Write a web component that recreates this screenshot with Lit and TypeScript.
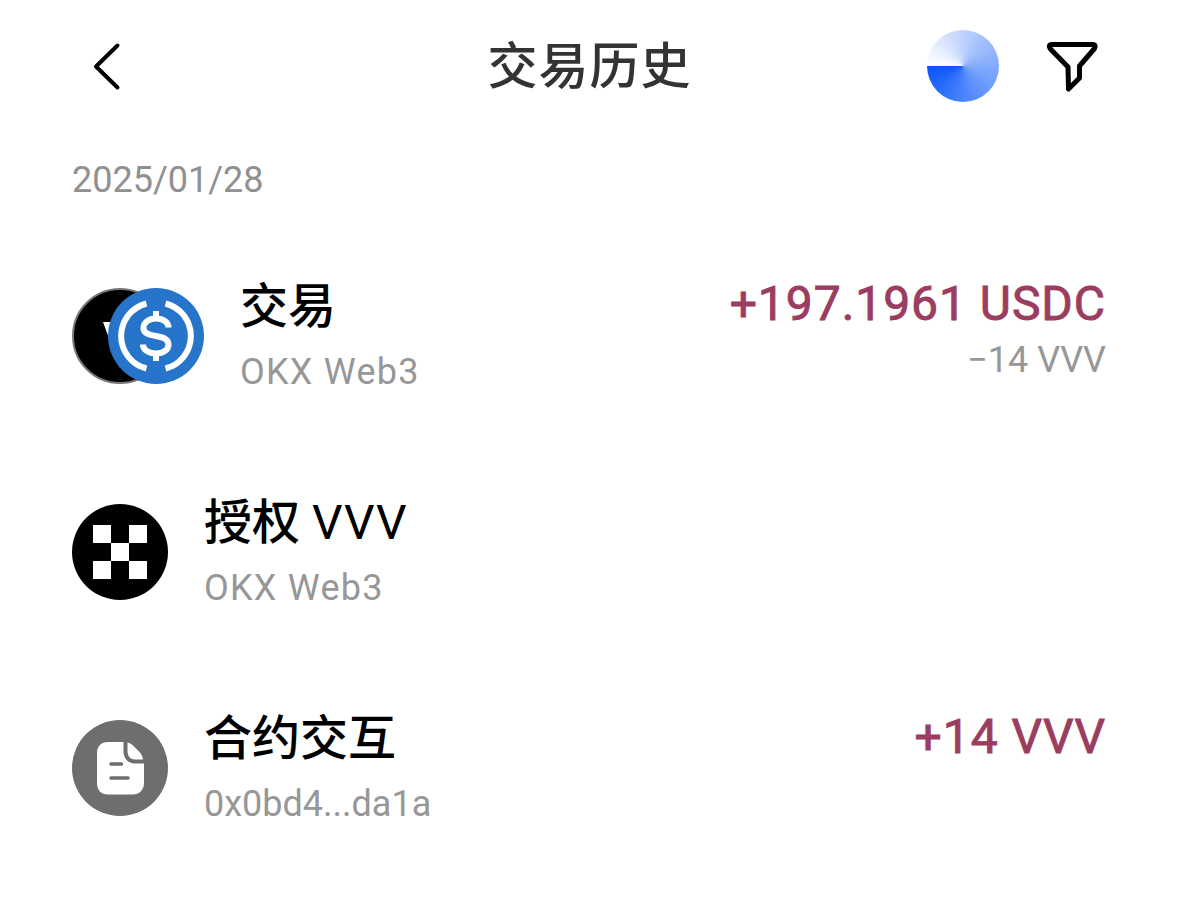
import { LitElement, html, css, svg } from "lit";
import { customElement } from "lit/decorators.js";

const usdcIcon = svg`<svg class="usdc" viewBox="0 0 96 96"><circle cx="48" cy="48" r="48" fill="#2775ca"/>
<path d="M38.500 15.500 A33.500 33.500 0 0 0 38.500 80.500 M57.500 15.500 A33.500 33.500 0 0 1 57.500 80.500" fill="none" stroke="#fff" stroke-width="6"/>
<path d="M60.500 39.500 C60.500 34 55 30.500 48 30.500 C41 30.500 35.500 34.500 35.500 40 C35.500 45.500 41 47 48 48 C55 49 60.500 51 60.500 56.500 C60.500 62 55 65.500 48 65.500 C41 65.500 35 62 35 56.500" fill="none" stroke="#fff" stroke-width="6"/>
<path d="M48 23 V31 M48 65 V73" stroke="#fff" stroke-width="6"/></svg>`;

const vvvIcon = svg`<svg class="vvv" viewBox="0 0 96 96"><circle cx="48" cy="48" r="47" fill="#000" stroke="#777" stroke-width="2"/>
<path d="M31 34 H65 L48 80 Z" fill="#fff"/></svg>`;

const okxIcon = svg`<svg class="icon" viewBox="0 0 96 96"><circle cx="48" cy="48" r="48" fill="#000"/>
<g fill="#fff"><rect x="21" y="21" width="18" height="18"/><rect x="57" y="21" width="18" height="18"/><rect x="39" y="39" width="18" height="18"/><rect x="21" y="57" width="18" height="18"/><rect x="57" y="57" width="18" height="18"/></g></svg>`;

const docIcon = svg`<svg class="icon" viewBox="0 0 96 96"><circle cx="48" cy="48" r="48" fill="#6e6e6e"/>
<path d="M36 22 H51.500 V31 C51.500 38.500 56 43.500 63 43.500 H72 V63 C72 70 67 74.500 61 74.500 H36 C29 74.500 25 70 25 63 V33 C25 26.500 29 22 36 22 Z" fill="#fff"/>
<path d="M55.500 22.500 C58 23 60 24.500 62 26.500 L67 31.500 C69 33.500 70.500 36 71 39.500 H63 C58.500 39.500 55.500 36 55.500 31 Z" fill="#fff"/>
<path d="M39 44 H49.500 M39 58 H56" stroke="#6e6e6e" stroke-width="3.500" stroke-linecap="round" fill="none"/></svg>`;

@customElement("app-root")
export class AppRoot extends LitElement {
  static styles = css`
    :host {
      display: block;
      width: 1179px;
      height: 897px;
      background: #fff;
      font-family: "Roboto", "Noto Sans CJK SC", sans-serif;
      overflow: hidden;
    }
    .header {
      display: grid;
      grid-template-columns: 1fr auto 1fr;
      align-items: center;
      height: 72px;
      padding: 30px 80px 0 90px;
    }
    .back { width: 34px; height: 50px; display: block; }
    .title {
      font-family: "Noto Sans CJK SC", sans-serif;
      font-size: 50px;
      font-weight: 500;
      line-height: 64px;
      padding-bottom: 8px;
      letter-spacing: 1px;
      color: #333;
      transform: translateX(-5px);
    }
    .actions {
      display: flex;
      justify-content: flex-end;
      align-items: center;
      gap: 46px;
    }
    .spinner {
      width: 72px;
      height: 72px;
      border-radius: 50%;
      background: conic-gradient(from 270deg, #fff 0deg, #a9c4fd 120deg, #5f92fb 240deg, #0a55fb 360deg);
    }
    .filter { width: 54px; height: 54px; display: block; }
    .date {
      margin: 57px 0 0 72px;
      font-size: 36px;
      line-height: 42px;
      color: #909090;
    }
    .rows { display: flex; flex-direction: column; padding: 0 73px 0 72px; margin-top: 79px; gap: 104px; }
    .row { display: flex; align-items: center; justify-content: space-between; height: 112px; }
    .left { display: flex; align-items: center; gap: 36px; }
    .icons { position: relative; width: 132px; height: 96px; flex: none; }
    .vvv, .usdc { position: absolute; top: 0; width: 96px; height: 96px; }
    .vvv { left: 0; }
    .usdc { left: 36px; }
    .icon { width: 96px; height: 96px; display: block; flex: none; }
    .info { display: flex; flex-direction: column; gap: 15px; }
    .name {
      font-size: 48px;
      line-height: 56px;
      font-weight: 500;
      color: #000;
    }
    .name .latin { font-weight: 400; letter-spacing: 1.5px; }
    .sub { font-size: 36px; line-height: 44px; color: #979797; }
    .sub.wide { letter-spacing: 1.25px; }
    .right { display: flex; flex-direction: column; align-items: flex-end; align-self: flex-start; margin-top: -6px; }
    .amount {
      font-size: 48px;
      line-height: 60px;
      font-weight: 400;
      letter-spacing: 0.95px;
      -webkit-text-stroke: 0.9px #9b3d60;
      color: #9b3d60;
    }
    .row:last-child .amount { padding-top: 1px; }
    .minor { font-size: 36px; line-height: 44px; margin-top: 4px; color: #979797; }
  `;

  render() {
    return html`
      <div class="header">
        <svg class="back" viewBox="0 0 34 50"><path d="M27.500 4.500 L6 25.500 L27.500 46.500" fill="none" stroke="#000" stroke-width="4" stroke-linecap="round" stroke-linejoin="round"/></svg>
        <div class="title">交易历史</div>
        <div class="actions">
          <div class="spinner"></div>
          <svg class="filter" viewBox="0 0 54 54"><path d="M6.500 5.500 H48 C50 5.500 51 7.500 49.500 9.500 L34.500 27 V39 L23.500 50 L23 28 L5 9.500 C3.500 7.500 4.500 5.500 6.500 5.500 Z" fill="none" stroke="#000" stroke-width="5" stroke-linejoin="round"/></svg>
        </div>
      </div>
      <div class="date">2025/01/28</div>
      <div class="rows">
        <div class="row">
          <div class="left">
            <div class="icons">${vvvIcon}${usdcIcon}</div>
            <div class="info"><div class="name">交易</div><div class="sub wide">OKX Web3</div></div>
          </div>
          <div class="right"><div class="amount">+197.1961 USDC</div><div class="minor">−14 VVV</div></div>
        </div>
        <div class="row">
          <div class="left">
            ${okxIcon}
            <div class="info"><div class="name">授权 <span class="latin">VVV</span></div><div class="sub wide">OKX Web3</div></div>
          </div>
        </div>
        <div class="row">
          <div class="left">
            ${docIcon}
            <div class="info"><div class="name">合约交互</div><div class="sub">0x0bd4...da1a</div></div>
          </div>
          <div class="right"><div class="amount">+14 VVV</div></div>
        </div>
      </div>
    `;
  }
}
